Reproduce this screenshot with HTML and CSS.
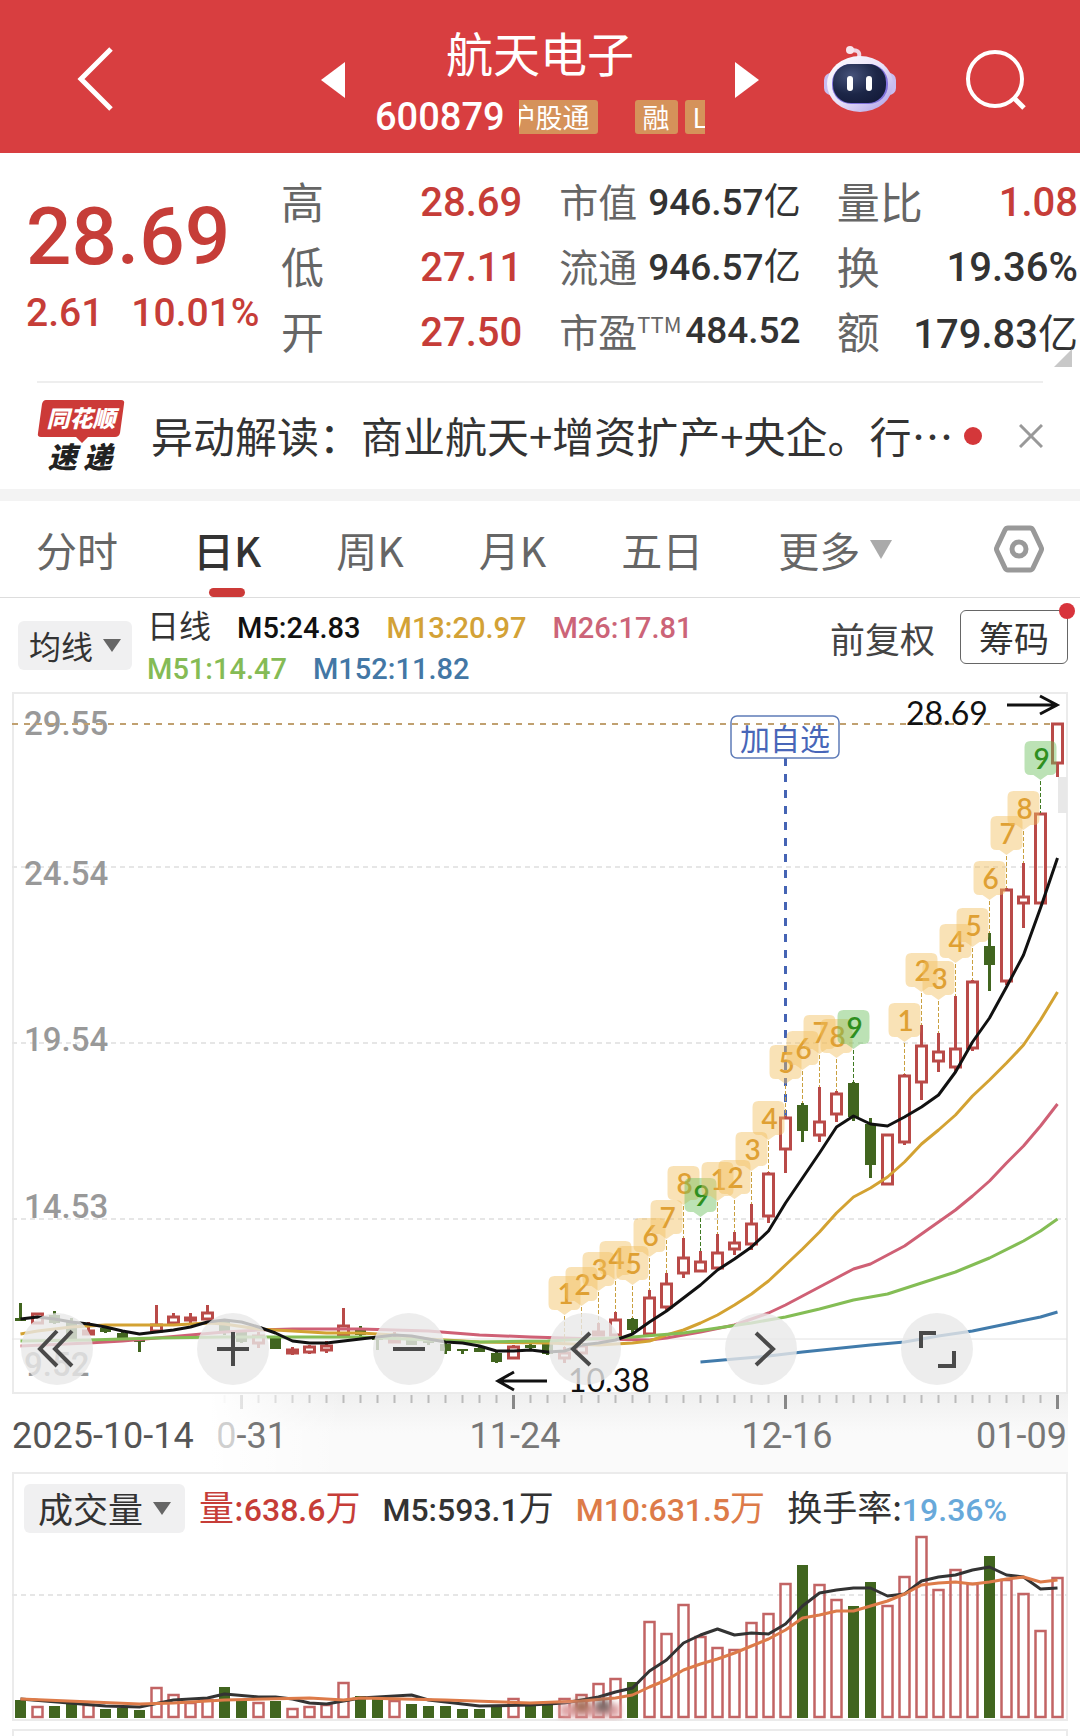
FILE: index.html
```html
<!DOCTYPE html>
<html lang="zh-CN">
<head>
    <meta charset="UTF-8">
    <meta name="viewport" content="width=device-width, initial-scale=1.0">
    <title>航天电子 600879</title>
    <link rel="stylesheet" href="styles.css">
</head>
<body>
    <header class="header">
        <button class="icon-btn back-btn" aria-label="返回">
            <svg width="40" height="68" viewBox="0 0 40 68"><path d="M35 3 L5 33 L35 63" fill="none" stroke="#fff" stroke-width="5"/></svg>
        </button>
        <div class="stock-nav">
            <button class="icon-btn" aria-label="上一只">
                <svg width="24" height="36" viewBox="0 0 24 36"><path d="M24 0 V36 L0 18 Z" fill="#fff"/></svg>
            </button>
            <div class="stock-name">
                <h1>航天电子</h1>
                <div class="stock-code">
                    <span class="num">600879</span>
                    <div class="tags">
                        <span class="tag tag-cut">沪股通</span>
                        <span class="tag">融</span>
                        <span class="tag tag-last">L1</span>
                    </div>
                </div>
            </div>
            <button class="icon-btn" aria-label="下一只">
                <svg width="24" height="36" viewBox="0 0 24 36"><path d="M0 0 V36 L24 18 Z" fill="#fff"/></svg>
            </button>
        </div>
        <div class="header-tools">
            <button class="icon-btn" aria-label="智能助手">
                <svg width="72" height="70" viewBox="0 0 72 70">
                    <defs>
                        <linearGradient id="shell" x1="0" y1="0" x2="1" y2="1">
                            <stop offset="0" stop-color="#fff"/>
                            <stop offset="0.5" stop-color="#e9e2f8"/>
                            <stop offset="1" stop-color="#a99be6"/>
                        </linearGradient>
                        <radialGradient id="visor" cx="0.35" cy="0.3" r="0.8">
                            <stop offset="0" stop-color="#46527a"/>
                            <stop offset="0.6" stop-color="#1c2647"/>
                            <stop offset="1" stop-color="#141b3a"/>
                        </radialGradient>
                    </defs>
                    <path d="M34 15 C37 8 35 5 27 5" fill="none" stroke="#f1d6e4" stroke-width="4"/>
                    <circle cx="26" cy="5" r="4" fill="#f8e6ee"/>
                    <rect x="0" y="28" width="14" height="22" rx="7" fill="#c9bdf0"/>
                    <rect x="58" y="28" width="14" height="22" rx="7" fill="#c9bdf0"/>
                    <ellipse cx="36" cy="39" rx="33" ry="28" fill="url(#shell)"/>
                    <rect x="8" y="19" width="56" height="40" rx="19" fill="#8072dc"/>
                    <rect x="9" y="19" width="53" height="39" rx="18" fill="url(#visor)"/>
                    <rect x="23" y="31" width="6" height="15" rx="3" fill="#fff"/>
                    <rect x="42" y="31" width="6" height="15" rx="3" fill="#fff"/>
                </svg>
            </button>
            <button class="icon-btn" aria-label="搜索">
                <svg width="62" height="62" viewBox="0 0 62 62"><circle cx="30" cy="30" r="27" fill="none" stroke="#fff" stroke-width="4"/><path d="M49 49 L59 59" stroke="#fff" stroke-width="5"/></svg>
            </button>
        </div>
    </header>

    <section class="quote">
        <div class="price">
            <div class="price-now num">28.69</div>
            <div class="price-change num"><span>2.61</span><span>10.01%</span></div>
        </div>
        <dl class="stats">
            <div><dt>高</dt><dd class="num up">28.69</dd></div>
            <div><dt>低</dt><dd class="num up">27.11</dd></div>
            <div><dt>开</dt><dd class="num up">27.50</dd></div>
        </dl>
        <dl class="stats stats-mid">
            <div><dt>市值</dt><dd class="num">946.57<i>亿</i></dd></div>
            <div><dt>流通</dt><dd class="num">946.57<i>亿</i></dd></div>
            <div><dt>市盈<sup>TTM</sup></dt><dd class="num">484.52</dd></div>
        </dl>
        <dl class="stats stats-right">
            <div><dt>量比</dt><dd class="num up">1.08</dd></div>
            <div><dt>换</dt><dd class="num">19.36%</dd></div>
            <div><dt>额</dt><dd class="num">179.83<i>亿</i></dd></div>
        </dl>
        <span class="corner"></span>
    </section>

    <section class="news">
        <svg class="news-logo" width="88" height="74" viewBox="0 0 88 74">
            <path d="M9 1 H84 Q88 1 87 5 L83 34 Q82 38 78 38 H51 L45 44 L39 38 H4 Q0 38 1 34 L5 5 Q6 1 9 1 Z" fill="#cc3a38"/>
            <text class="logo-top" x="44" y="28">同花顺</text>
            <text class="logo-bottom" x="43" y="69">速 递</text>
        </svg>
        <a class="news-text" href="#">异动解读：商业航天+增资扩产+央企。行⋯</a>
        <span class="news-dot"></span>
        <button class="icon-btn" aria-label="关闭">
            <svg width="24" height="24" viewBox="0 0 24 24"><path d="M1 1 L23 23 M23 1 L1 23" stroke="#999" stroke-width="3"/></svg>
        </button>
    </section>

    <nav class="tabs">
        <button class="tab">分时</button>
        <button class="tab active">日K</button>
        <button class="tab">周K</button>
        <button class="tab">月K</button>
        <button class="tab">五日</button>
        <button class="tab">更多<span class="arrow arrow-light"></span></button>
        <button class="icon-btn settings-btn" aria-label="设置">
            <svg width="50" height="48" viewBox="0 0 50 48"><path d="M14 3 H36 Q38 3 39 5 L47 22 Q48 24 47 26 L39 43 Q38 45 36 45 H14 Q12 45 11 43 L3 26 Q2 24 3 22 L11 5 Q12 3 14 3 Z" fill="none" stroke="#999" stroke-width="5"/><circle cx="25" cy="24" r="7" fill="none" stroke="#999" stroke-width="5"/></svg>
        </button>
    </nav>

    <section class="legend">
        <button class="picker">均线<span class="arrow"></span></button>
        <div class="legend-list">
            <span class="ink legend-title">日线</span>
            <span class="num m5">M5:24.83</span>
            <span class="num m13">M13:20.97</span>
            <span class="num m26">M26:17.81</span>
            <span class="num m51">M51:14.47</span>
            <span class="num m152">M152:11.82</span>
        </div>
        <div class="legend-actions">
            <button class="adjust-btn">前复权</button>
            <button class="chips-btn">筹码<span class="chips-dot"></span></button>
        </div>
    </section>

    <section class="panel kline">
        <svg id="klineChart" viewBox="12 692 1056 702"></svg>
        <div class="chart-controls">
            <button class="round-btn" aria-label="最早"><svg viewBox="0 0 72 72"><path d="M36 18 L19 36 L36 53 M51 18 L34 36 L51 53"/></svg></button>
            <button class="round-btn" aria-label="放大"><svg viewBox="0 0 72 72"><path d="M36 19 V53 M20 36 H52"/></svg></button>
            <button class="round-btn" aria-label="缩小"><svg viewBox="0 0 72 72"><path d="M20 36 H52"/></svg></button>
            <button class="round-btn" aria-label="左移"><svg viewBox="0 0 72 72"><path d="M41 20 L24 36 L41 52"/></svg></button>
            <button class="round-btn" aria-label="右移"><svg viewBox="0 0 72 72"><path d="M31 20 L48 36 L31 52"/></svg></button>
            <button class="round-btn" aria-label="全屏"><svg viewBox="0 0 72 72"><path d="M20 35 V20 H35 M37 53 H53 V38"/></svg></button>
        </div>
    </section>

    <div class="time-axis">
        <svg id="timeAxis" viewBox="12 1394 1056 78"></svg>
    </div>

    <section class="panel volume">
        <div class="volume-head">
            <button class="picker">成交量<span class="arrow"></span></button>
            <span class="num up"><i>量:</i>638.6<i>万</i></span>
            <span class="num ink">M5:593.1<i>万</i></span>
            <span class="num m10">M10:631.5<i>万</i></span>
            <span class="num ink"><i>换手率:</i><b class="rate">19.36%</b></span>
        </div>
        <svg id="volumeChart" viewBox="12 1534 1056 187"></svg>
    </section>
    <section class="panel next-panel"></section>

    <script src="chart.js"></script>
</body>
</html>
```

FILE: styles.css
```css
:root {
    --num: "Roboto", "Noto Sans CJK SC", sans-serif;
    --cjk: "Noto Sans CJK SC", sans-serif;
    --red: #d83e40;
    --up: #c63d38;
    --ink: #333;
    --muted: #666;
}

* {
    margin: 0;
    padding: 0;
    box-sizing: border-box;
}

body {
    font-family: var(--cjk);
    background: #fff;
    color: var(--ink);
    overflow-x: hidden;
}

button {
    font: inherit;
    color: inherit;
    background: none;
    border: none;
    cursor: pointer;
}

svg {
    display: block;
}

i, b {
    font-style: normal;
    font-weight: inherit;
}

.num {
    font-family: var(--num);
    font-weight: 500;
}

.num i {
    font-family: var(--cjk);
    font-weight: 400;
}

.up { color: var(--up); }
.ink { color: var(--ink); }
.m5 { color: #111; }
.m13 { color: #d3a236; }
.m26 { color: #cc6478; }
.m51 { color: #85bb55; }
.m152 { color: #4377a5; }
.m10 { color: #dd7b49; }
.rate { color: #68a9da; }

/* Header */
.header {
    display: flex;
    align-items: center;
    justify-content: space-between;
    height: 153px;
    padding: 7px 53px 0 76px;
    background: var(--red);
    color: #fff;
}

.stock-nav {
    display: flex;
    align-items: center;
    gap: 30px;
    margin-left: 140px;
}

.stock-name {
    width: 330px;
    padding-top: 10px;
}

.stock-name h1 {
    font-size: 47px;
    font-weight: 400;
    line-height: 64px;
    text-align: center;
}

.stock-code {
    display: flex;
    align-items: center;
    gap: 14px;
    height: 66px;
    font-size: 38px;
}

.tags {
    display: flex;
    flex: 1;
    overflow: hidden;
}

.tag {
    flex: none;
    height: 34px;
    padding: 0 8px;
    border-radius: 3px;
    background: #d5925a;
    font-size: 27px;
    line-height: 34px;
}

.tag-cut {
    margin: 0 37px 0 -18px;
}

.tag-last {
    margin-left: 7px;
}

.header-tools {
    display: flex;
    align-items: center;
    gap: 69px;
}

/* Quote */
.quote {
    position: relative;
    display: flex;
    height: 228px;
    padding-top: 14px;
}

.price {
    width: 281px;
    padding: 26px 0 0 26px;
    color: var(--up);
}

.price-now {
    font-size: 80px;
    line-height: 88px;
}

.price-change {
    display: flex;
    gap: 28px;
    font-size: 39px;
    line-height: 64px;
}

.stats {
    flex: 1;
    padding-right: 26px;
    font-size: 43px;
}

.stats div {
    display: flex;
    justify-content: space-between;
    align-items: center;
    height: 65px;
    white-space: nowrap;
}

.stats dt {
    color: var(--muted);
}

.stats dd {
    padding-top: 6px;
    font-size: 40px;
    line-height: 64px;
}

.stats-mid {
    padding: 0 14px 0 11px;
    font-size: 39px;
}

.stats-mid dd {
    padding-top: 2px;
    font-size: 37px;
}

.stats-mid sup {
    font-size: 22px;
    line-height: 22px;
}

.stats-right {
    padding: 0 2px 0 22px;
}

.corner {
    position: absolute;
    right: 8px;
    bottom: 14px;
    border-left: 18px solid transparent;
    border-bottom: 18px solid #c8c8c8;
}

/* News */
.news {
    display: flex;
    align-items: center;
    height: 108px;
    margin: 0 37px;
    border-top: 2px solid #eee;
}

.news-logo {
    flex: none;
    margin-right: 26px;
}

.news-logo text {
    font-family: var(--cjk);
    font-weight: 900;
    font-style: italic;
    text-anchor: middle;
}

.logo-top {
    font-size: 23px;
    fill: #fff;
}

.logo-bottom {
    font-size: 29px;
    fill: #222;
}

.news-text {
    flex: 1;
    padding-bottom: 4px;
    font-size: 42px;
    color: var(--ink);
    text-decoration: none;
    white-space: nowrap;
}

.news-dot {
    flex: none;
    width: 18px;
    height: 18px;
    margin: 0 37px 0 10px;
    border-radius: 50%;
    background: #d4373a;
}

/* Tabs */
.tabs {
    display: flex;
    align-items: center;
    gap: 75px;
    height: 109px;
    padding: 0 36px;
    border-top: 12px solid #f3f3f3;
    border-bottom: 1px solid #ddd;
}

.tab {
    position: relative;
    display: flex;
    align-items: center;
    height: 96px;
    font-size: 41px;
    color: var(--muted);
    white-space: nowrap;
}

.tab.active {
    color: var(--ink);
    font-weight: 500;
}

.tab.active::after {
    content: "";
    position: absolute;
    left: calc(50% - 18px);
    bottom: 0;
    width: 36px;
    height: 9px;
    border-radius: 5px;
    background: #cc3a38;
}

.settings-btn {
    margin-left: auto;
}

.arrow {
    display: inline-block;
    border: 9px solid transparent;
    border-top: 13px solid #666;
    border-bottom: none;
    margin-left: 10px;
}

.arrow-light {
    border-width: 11px;
    border-top: 19px solid #aaa;
    border-bottom: none;
}

/* Legend */
.legend {
    display: flex;
    align-items: center;
    height: 94px;
    padding: 0 12px 0 18px;
}

.picker {
    display: flex;
    align-items: center;
    height: 49px;
    padding: 0 11px;
    border-radius: 6px;
    background: #f0f0f1;
    font-size: 32px;
    white-space: nowrap;
}

.legend-list {
    flex: 1;
    display: flex;
    flex-wrap: wrap;
    align-items: baseline;
    column-gap: 26px;
    margin-left: 15px;
    padding-top: 4px;
    font-size: 29px;
    line-height: 41px;
}

.legend-title {
    font-size: 32px;
}

.legend-actions {
    display: flex;
    align-items: center;
    gap: 25px;
    padding-bottom: 16px;
}

.adjust-btn {
    font-size: 35px;
    color: #444;
}

.chips-btn {
    position: relative;
    width: 108px;
    height: 54px;
    border: 1px solid #666;
    border-radius: 6px;
    font-size: 35px;
    line-height: 50px;
}

.chips-dot {
    position: absolute;
    top: -8px;
    right: -8px;
    width: 16px;
    height: 16px;
    border-radius: 50%;
    background: #d8343c;
}

/* Charts */
.panel {
    position: relative;
    margin: 0 12px;
    border: 2px solid #ebebeb;
}

#klineChart,
#volumeChart {
    width: calc(100% + 4px);
    margin: -2px;
}

.chart-controls {
    position: absolute;
    left: 7px;
    right: 93px;
    bottom: 7px;
    display: flex;
    justify-content: space-between;
}

.round-btn {
    width: 72px;
    height: 72px;
    border-radius: 50%;
    background: rgba(232, 232, 232, 0.8);
}

.round-btn path {
    fill: none;
    stroke: #4a4a4a;
    stroke-width: 4;
}

.time-axis {
    margin: 0 12px;
    background: linear-gradient(#f0f0f0, #fafafa 50%);
}

.volume-head {
    display: flex;
    align-items: center;
    gap: 22px;
    height: 62px;
    padding: 6px 10px 0;
    font-size: 32px;
    line-height: 50px;
    white-space: nowrap;
}

.volume-head i {
    font-size: 35px;
}

.volume-head .picker {
    padding: 0 14px;
    font-size: 35px;
    margin-right: -8px;
}

.next-panel {
    height: 20px;
    margin-top: 8px;
    border-bottom: none;
}

/* Chart text */
.axis-label {
    font: 500 33px var(--num);
    fill: #999;
}

.date-label {
    font: 400 36px var(--num);
    fill: #777;
}

.mark-label {
    font: 400 32px "Lato", sans-serif;
    fill: #111;
}

.add-label {
    font: 400 30px var(--cjk);
    fill: #4866b8;
    text-anchor: middle;
}

.badge-label {
    font: 600 28px "Lato", sans-serif;
    text-anchor: middle;
}

.smudge {
    filter: blur(3px);
}
```

FILE: chart.js
```js
const UP = '#b94a48';
const DOWN = '#41651f';
const STEP = 17;
const x = i => 20.5 + i * STEP;

// [direction, high, body top, body bottom, low]
const candles = [
    ['d', 1303, 1318, 1321, 1321], ['u', 1313, 1313, 1323, 1323], ['d', 1311, 1315, 1323, 1324],
    ['d', 1318, 1322, 1340, 1340], ['u', 1322, 1330, 1334, 1334], ['d', 1327, 1328, 1332, 1333],
    ['d', 1332, 1333, 1338, 1338], ['d', 1340, 1340, 1342, 1352], ['u', 1305, 1324, 1331, 1331],
    ['u', 1313, 1316, 1323, 1323], ['u', 1313, 1317, 1320, 1323], ['u', 1305, 1312, 1319, 1319],
    ['d', 1320, 1320, 1331, 1335], ['d', 1331, 1331, 1342, 1343], ['u', 1332, 1335, 1343, 1348],
    ['d', 1338, 1338, 1349, 1349], ['u', 1347, 1349, 1353, 1355], ['u', 1345, 1346, 1352, 1354],
    ['u', 1341, 1345, 1350, 1353], ['u', 1308, 1325, 1335, 1335], ['d', 1326, 1329, 1335, 1336],
    ['d', 1337, 1337, 1340, 1350], ['u', 1332, 1338, 1342, 1342], ['d', 1337, 1337, 1345, 1345],
    ['d', 1338, 1339, 1343, 1345], ['d', 1343, 1344, 1351, 1354], ['d', 1349, 1349, 1351, 1354],
    ['d', 1347, 1348, 1352, 1352], ['d', 1351, 1353, 1362, 1363], ['u', 1345, 1346, 1358, 1358],
    ['d', 1340, 1345, 1348, 1350], ['d', 1341, 1342, 1354, 1355], ['u', 1347, 1352, 1358, 1363],
    ['u', 1345, 1345, 1353, 1354], ['u', 1323, 1331, 1335, 1336], ['u', 1312, 1319, 1335, 1335],
    ['d', 1318, 1319, 1330, 1333], ['u', 1290, 1297, 1334, 1334], ['u', 1273, 1283, 1307, 1310],
    ['u', 1238, 1257, 1273, 1278], ['u', 1251, 1261, 1271, 1272], ['u', 1234, 1252, 1268, 1269],
    ['u', 1232, 1242, 1249, 1255], ['u', 1204, 1223, 1244, 1250], ['u', 1172, 1173, 1216, 1223],
    ['u', 1116, 1117, 1149, 1173], ['d', 1103, 1105, 1131, 1142], ['u', 1087, 1121, 1135, 1142],
    ['u', 1091, 1093, 1114, 1122], ['d', 1082, 1083, 1117, 1121], ['d', 1118, 1124, 1165, 1178],
    ['u', 1134, 1134, 1184, 1185], ['u', 1074, 1075, 1142, 1145], ['u', 1025, 1045, 1082, 1100],
    ['u', 1033, 1051, 1061, 1072], ['u', 996, 1048, 1067, 1072], ['u', 980, 981, 1048, 1051],
    ['d', 933, 946, 965, 991], ['u', 888, 889, 981, 985], ['u', 863, 896, 903, 928],
    ['u', 813, 813, 903, 904], ['u', 723, 723, 763, 777]
];

// [index, count, top]
const badges = [
    [32, 1, 1276], [33, 2, 1267], [34, 3, 1252], [35, 4, 1241], [36, 5, 1246], [37, 6, 1218],
    [38, 7, 1200], [39, 8, 1166], [40, 9, 1178], [41, 1, 1162], [42, 2, 1160], [43, 3, 1132],
    [44, 4, 1101], [45, 5, 1045], [46, 6, 1031], [47, 7, 1015], [48, 8, 1019], [49, 9, 1010],
    [52, 1, 1003], [53, 2, 953], [54, 3, 961], [55, 4, 924], [56, 5, 908], [57, 6, 861],
    [58, 7, 816], [59, 8, 791], [60, 9, 741]
];

const averages = [
    ['#417bab', [[40, 1362], [42, 1359], [44, 1356], [46, 1352], [50, 1345], [52, 1342], [54, 1336], [56, 1331], [58, 1324], [60, 1317], [61, 1312]]],
    ['#cf6075', [[0, 1346], [4, 1343], [6, 1341], [8, 1338], [10, 1335], [12, 1332], [14, 1330], [16, 1329], [20, 1329], [24, 1331], [27, 1335], [30, 1337], [34, 1339], [37, 1340], [38, 1338], [40, 1332], [42, 1325], [44, 1313], [45, 1305], [46, 1296], [47, 1287], [48, 1278], [49, 1269], [50, 1264], [51, 1255], [52, 1246], [53, 1234], [54, 1222], [55, 1210], [56, 1196], [57, 1181], [58, 1163], [59, 1146], [60, 1126], [61, 1104]]],
    ['#d3a232', [[0, 1334], [1, 1331], [3, 1327], [5, 1325], [7, 1325], [9, 1325], [11, 1323], [12, 1324], [14, 1329], [16, 1331], [18, 1333], [20, 1333], [22, 1335], [24, 1339], [27, 1342], [31, 1343], [34, 1345], [36, 1343], [37, 1341], [38, 1335], [39, 1330], [40, 1323], [41, 1315], [42, 1305], [43, 1294], [44, 1281], [45, 1265], [46, 1249], [47, 1232], [48, 1213], [49, 1197], [50, 1188], [51, 1177], [52, 1162], [53, 1144], [54, 1130], [55, 1115], [56, 1096], [57, 1080], [58, 1063], [59, 1045], [60, 1020], [61, 992]]],
    ['#84bd55', [[0, 1341], [4, 1340], [8, 1338], [12, 1337], [20, 1337], [24, 1340], [27, 1342], [31, 1341], [36, 1337], [39, 1333], [41, 1328], [43, 1323], [45, 1317], [47, 1309], [49, 1300], [51, 1294], [53, 1283], [55, 1272], [57, 1258], [59, 1241], [60, 1231], [61, 1219]]],
    ['#111', [[0, 1319], [1, 1317], [2, 1319], [3, 1322], [4, 1324], [5, 1327], [6, 1331], [7, 1334], [8, 1332], [9, 1330], [10, 1327], [11, 1322], [12, 1320], [13, 1322], [14, 1327], [15, 1333], [16, 1341], [17, 1343], [18, 1343], [19, 1341], [20, 1339], [21, 1337], [22, 1335], [23, 1336], [24, 1339], [25, 1342], [26, 1343], [27, 1346], [28, 1351], [29, 1351], [30, 1350], [31, 1352], [32, 1351], [33, 1345], [34, 1343], [35, 1340], [36, 1334], [37, 1322], [38, 1311], [39, 1298], [40, 1285], [41, 1270], [42, 1259], [43, 1247], [44, 1231], [45, 1203], [46, 1178], [47, 1153], [48, 1127], [49, 1116], [50, 1124], [51, 1126], [52, 1117], [53, 1107], [54, 1095], [55, 1072], [56, 1042], [57, 1018], [58, 987], [59, 955], [60, 908], [61, 858]]]
];

// top edge of every volume bar
const volumes = [
    1700, 1707, 1706, 1703, 1705, 1709, 1708, 1710, 1688, 1695, 1703, 1700, 1687, 1701, 1703, 1701,
    1709, 1707, 1705, 1683, 1696, 1697, 1701, 1704, 1706, 1706, 1709, 1709, 1706, 1699, 1704, 1704,
    1699, 1695, 1684, 1679, 1682, 1622, 1634, 1605, 1637, 1648, 1650, 1623, 1614, 1584, 1565, 1585,
    1600, 1606, 1582, 1606, 1577, 1537, 1590, 1570, 1584, 1556, 1580, 1594, 1631, 1578
];

const volumeAverages = [
    ['#333', [[0, 1699], [5, 1706], [7, 1707], [9, 1700], [11, 1698], [12, 1694], [14, 1697], [15, 1697], [16, 1699], [17, 1703], [18, 1704], [20, 1698], [22, 1696], [23, 1695], [24, 1700], [27, 1706], [30, 1705], [32, 1703], [34, 1697], [35, 1692], [36, 1688], [37, 1671], [38, 1660], [39, 1643], [40, 1635], [41, 1629], [42, 1635], [43, 1633], [44, 1634], [45, 1624], [46, 1606], [47, 1593], [48, 1590], [49, 1588], [50, 1588], [51, 1596], [52, 1594], [53, 1581], [54, 1577], [55, 1575], [56, 1570], [57, 1567], [58, 1575], [59, 1577], [60, 1589], [61, 1588]]],
    ['#dd7b49', [[0, 1699], [7, 1704], [9, 1703], [12, 1700], [17, 1698], [19, 1700], [20, 1698], [25, 1700], [30, 1703], [33, 1701], [35, 1698], [36, 1695], [37, 1687], [38, 1680], [39, 1670], [40, 1664], [41, 1659], [42, 1653], [43, 1646], [44, 1639], [45, 1630], [46, 1618], [47, 1615], [48, 1611], [49, 1611], [50, 1606], [51, 1601], [52, 1594], [53, 1585], [54, 1583], [55, 1582], [56, 1584], [57, 1582], [58, 1579], [59, 1577], [60, 1582], [61, 1580]]]
];

function line(x1, y1, x2, y2, color, width, dash) {
    return `<line x1="${x1}" y1="${y1}" x2="${x2}" y2="${y2}" stroke="${color}" stroke-width="${width}"${dash ? ` stroke-dasharray="${dash}"` : ''}/>`;
}

function curve(color, points, width) {
    return `<polyline points="${points.map(p => x(p[0]) + ',' + p[1]).join(' ')}" fill="none" stroke="${color}" stroke-width="${width}" stroke-linejoin="round"/>`;
}

function drawKline() {
    let out = '';
    [867, 1043, 1219].forEach(y => out += line(12, y, 1067, y, '#e6e6e6', 2, '5 4'));
    out += line(12, 1339, 1067, 1339, '#e2e2e2', 1);

    [['29.55', 735], ['24.54', 885], ['19.54', 1051], ['14.53', 1218], ['9.52', 1376]]
        .forEach(([text, y]) => out += `<text class="axis-label" x="24" y="${y}">${text}</text>`);

    out += line(12, 724, 1050, 724, '#c0a070', 2, '6 6');
    out += line(785.5, 758, 785.5, 1117, '#4564b4', 3, '8 8');
    out += '<rect x="1058" y="777" width="9" height="36" fill="#e8e8e8"/>';

    candles.forEach(([dir, high, top, bottom, low], i) => {
        const c = x(i);
        if (dir === 'u') {
            out += line(c, high, c, top, UP, 3) + line(c, bottom, c, low, UP, 3);
            out += `<rect x="${c - 5}" y="${top + 1}" width="10" height="${Math.max(2, bottom - top - 1)}" fill="none" stroke="${UP}" stroke-width="3"/>`;
        } else {
            out += line(c, high, c, low, DOWN, 3);
            out += `<rect x="${c - 5.5}" y="${top}" width="11" height="${bottom - top}" fill="${DOWN}"/>`;
        }
    });

    averages.forEach(([color, points]) => out += curve(color, points, 3));

    badges.forEach(([i, count, top]) => {
        const c = x(i);
        const color = count === 9 ? '#6abf5c' : '#f2be5e';
        const ink = count === 9 ? '#2f8f1f' : '#dfa033';
        out += line(c, top + 40, c, candles[i][1], count === 9 ? '#3f7a22' : '#c9a040', 1, '4 2');
        out += `<path d="M${c - 10} ${top} h20 q6 0 6 6 v22 q0 6 -6 6 h-3 l-7 5 l-7 -5 h-3 q-6 0 -6 -6 v-22 q0 -6 6 -6 z" fill="${color}" fill-opacity="0.45"/>`;
        out += `<text class="badge-label" x="${c + 1}" y="${top + 28}" fill="${ink}">${count}</text>`;
    });

    out += '<rect x="731" y="716" width="108" height="42" rx="6" fill="none" stroke="#5f7cb8" stroke-width="1.5"/>';
    out += '<text class="add-label" x="785" y="750">加自选</text>';
    out += '<text class="mark-label" x="906" y="725">28.69</text>';
    out += '<path d="M1007 705 H1057 M1040 696 L1057 705 L1040 714" fill="none" stroke="#111" stroke-width="3"/>';
    out += '<text class="mark-label" x="568" y="1392">10.38</text>';
    out += '<path d="M547 1381 H498 M514 1372 L498 1381 L514 1390" fill="none" stroke="#111" stroke-width="3"/>';
    document.getElementById('klineChart').innerHTML = out;
}

function drawTimeAxis() {
    let out = '<defs><linearGradient id="fade"><stop offset="0.6" stop-color="#fff"/><stop offset="1" stop-color="#fff" stop-opacity="0"/></linearGradient></defs>';
    for (let i = 12; i < 62; i++) {
        const major = (i - 13) % 16 === 0;
        out += line(x(i), 1395, x(i), major ? 1409 : 1403, major ? '#888' : '#bbb', major ? 3 : 2);
    }
    out += '<rect x="12" y="1394" width="330" height="78" fill="url(#fade)"/>';
    out += '<text class="date-label" x="12" y="1448" style="fill:#555">2025-10-14</text>';
    out += '<text class="date-label" x="287" y="1448" text-anchor="end"><tspan fill-opacity="0.35">0</tspan>-31</text>';
    out += '<text class="date-label" x="515" y="1448" text-anchor="middle">11-24</text>';
    out += '<text class="date-label" x="787" y="1448" text-anchor="middle">12-16</text>';
    out += '<text class="date-label" x="1067" y="1448" text-anchor="end">01-09</text>';
    document.getElementById('timeAxis').innerHTML = out;
}

function drawVolume() {
    let out = line(12, 1595, 1067, 1595, '#e6e6e6', 2, '5 4');
    volumes.forEach((top, i) => {
        const c = x(i);
        if (candles[i][0] === 'u') {
            out += `<rect x="${c - 5}" y="${top}" width="10" height="${1717 - top}" fill="none" stroke="#c26464" stroke-width="2.5"/>`;
        } else {
            out += `<rect x="${c - 5.5}" y="${top}" width="11" height="${1718 - top}" fill="${DOWN}"/>`;
        }
    });
    volumeAverages.forEach(([color, points]) => out += curve(color, points, 3));
    out += '<g class="smudge"><rect x="560" y="1704" width="60" height="13" fill="#dfa3a5"/><rect x="575" y="1700" width="14" height="12" fill="#a5705c"/><rect x="596" y="1700" width="14" height="12" fill="#7d6a68"/></g>';
    document.getElementById('volumeChart').innerHTML = out;
}

drawKline();
drawTimeAxis();
drawVolume();
```
